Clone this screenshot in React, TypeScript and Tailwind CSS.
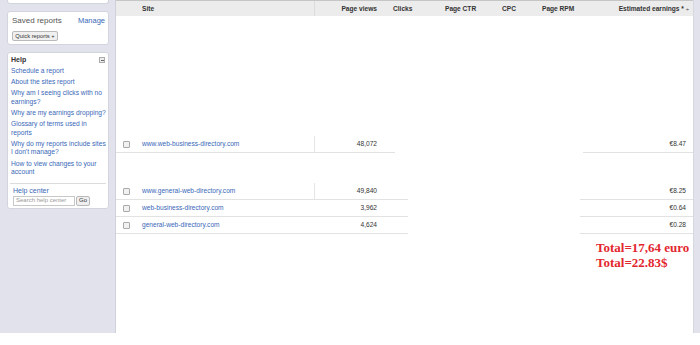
import React from "react";

const links: string[][] = [
  ["Schedule a report"],
  ["About the sites report"],
  ["Why am I seeing clicks with no", "earnings?"],
  ["Why are my earnings dropping?"],
  ["Glossary of terms used in", "reports"],
  ["Why do my reports include sites", "I don't manage?"],
  ["How to view changes to your", "account"],
];

function Checkbox() {
  return (
    <div className="w-[7px] h-[7px] border border-[#a9a9a9] bg-[#f1f1f1] rounded-[1px] shrink-0" />
  );
}

type Row = { site: string; views: string; earn: string; leftW: string; rightW: string; sep: boolean };

function DataRow({ r }: { r: Row }) {
  return (
    <div className="flex h-[17px] shrink-0">
      <div className={`flex ${r.leftW} border-b border-[#e2e2e2] h-full`}>
        <div
          className={`w-[199px] shrink-0 flex items-center pl-[7px] ${
            r.sep ? "border-r border-[#e6e6e6]" : ""
          }`}
        >
          <Checkbox />
          <span className="ml-[12px] text-[#3a68b8] whitespace-nowrap">{r.site}</span>
        </div>
        <div className="w-[62px] shrink-0 flex items-center justify-end text-[#333]">{r.views}</div>
      </div>
      <div className="flex-1" />
      <div className={`${r.rightW} border-b border-[#e2e2e2] h-full flex items-center justify-end pr-[7px] text-[#333]`}>
        {r.earn}
      </div>
    </div>
  );
}

export default function App() {
  const rows: Row[] = [
    { site: "www.general-web-directory.com", views: "49,840", earn: "€8.25", leftW: "w-[292px]", rightW: "w-[113px]", sep: true },
    { site: "web-business-directory.com", views: "3,962", earn: "€0.64", leftW: "w-[292px]", rightW: "w-[113px]", sep: false },
    { site: "general-web-directory.com", views: "4,624", earn: "€0.28", leftW: "w-[292px]", rightW: "w-[113px]", sep: false },
  ];
  return (
    <div className="w-[700px] h-[345px] bg-white flex flex-col overflow-hidden font-['Liberation_Sans',Arial,sans-serif] text-[6.6px]">
      <div className="flex h-[333px] shrink-0">
        {/* Sidebar */}
        <aside className="w-[116px] shrink-0 bg-[#e1e2eb] border-r border-[#cfd1da] flex flex-col px-[7px]">
          <div className="w-[102px] h-[4px] bg-white border border-t-0 border-[#d3d5de] rounded-b-[3px]" />
          <div className="mt-[7px] w-[102px] h-[34px] bg-white border border-[#d3d5de] rounded-[3px] flex flex-col pl-[4px] pr-[3px] pt-[4px]">
            <div className="flex items-center justify-between h-[10px]">
              <span className="text-[8px] text-[#555]">Saved reports</span>
              <span className="text-[7.5px] text-[#3a68b8]">Manage</span>
            </div>
            <div className="mt-[5px] w-[46px] h-[10px] border border-[#b9b9b9] rounded-[2px] bg-[#f0f0f0] flex items-center justify-center text-[5.8px] text-[#333] whitespace-nowrap">
              Quick reports +
            </div>
          </div>
          <div className="mt-[7px] w-[102px] h-[157px] bg-white border border-[#d3d5de] rounded-[3px] flex flex-col px-[2px]">
            <div className="flex items-center justify-between h-[12px] mt-[1px] pl-[1px] pr-[1px]">
              <span className="font-bold text-[7px] text-[#333]">Help</span>
              <div className="w-[6px] h-[6px] border border-[#aaa] bg-[#eee] flex items-center justify-center">
                <div className="w-[3px] h-[1px] bg-[#666]" />
              </div>
            </div>
            <div className="flex flex-col gap-[2.7px] mt-[1px] pl-[1px] text-[6.7px] leading-[8.5px] text-[#3a68b8]">
              {links.map((l, i) => (
                <div key={i} className="flex flex-col">
                  {l.map((t, j) => (
                    <span key={j} className="whitespace-nowrap">{t}</span>
                  ))}
                </div>
              ))}
            </div>
            <div className="mt-[6px] h-px bg-[#dcdcdc] w-[96px]" />
            <div className="pl-[3px] mt-[2px] text-[7px] leading-[9px] text-[#3a68b8]">Help center</div>
            <div className="pl-[3px] mt-[1px] flex items-center gap-[1px]">
              <div className="w-[62px] h-[10px] border border-[#c8c8c8] flex items-center pl-[2px] text-[6px] text-[#9a9a9a] whitespace-nowrap">
                Search help center
              </div>
              <div className="w-[14px] h-[10px] border border-[#b9b9b9] rounded-[2px] bg-[#efefef] flex items-center justify-center text-[6px] text-[#333]">
                Go
              </div>
            </div>
          </div>
        </aside>

        {/* Main */}
        <main className="w-[577px] shrink-0 flex flex-col bg-white">
          <div className="h-[16px] shrink-0 bg-[#ececec] border-t border-[#c6c6c6] flex items-center font-bold text-[#333] whitespace-nowrap">
            <div className="w-[199px] shrink-0 pl-[26px] h-full flex items-center border-r border-[#dcdcdc]">Site</div>
            <div className="w-[62px] shrink-0 text-right">Page views</div>
            <div className="w-[3px] shrink-0" />
            <div className="w-[50px] shrink-0 pl-[13px]">Clicks</div>
            <div className="w-[60px] shrink-0 pl-[15px]">Page CTR</div>
            <div className="w-[40px] shrink-0 pl-[12px]">CPC</div>
            <div className="w-[53px] shrink-0 pl-[12px]">Page RPM</div>
            <div className="w-[110px] shrink-0 text-right pr-[4px]">
              Estimated earnings * <span className="text-[6px] font-normal">÷</span>
            </div>
          </div>
          <div className="h-[120px] shrink-0" />
          <DataRow r={{ site: "www.web-business-directory.com", views: "48,072", earn: "€8.47", leftW: "w-[279px]", rightW: "w-[110px]", sep: true }} />
          <div className="h-[30px] shrink-0" />
          {rows.map((r) => (
            <DataRow key={r.site} r={r} />
          ))}
          <div className="mt-[6px] ml-[480px] flex flex-col font-['Liberation_Serif','Times_New_Roman',serif] font-bold text-[13px] leading-[15px] text-[#e3262e] whitespace-nowrap">
            <span>Total=17,64 euro</span>
            <span>Total=22.83$</span>
          </div>
        </main>

        <div className="flex-1 bg-[#e1e2eb] border-l border-[#d6d8e0]" />
      </div>
      <div className="flex-1 bg-white" />
    </div>
  );
}
